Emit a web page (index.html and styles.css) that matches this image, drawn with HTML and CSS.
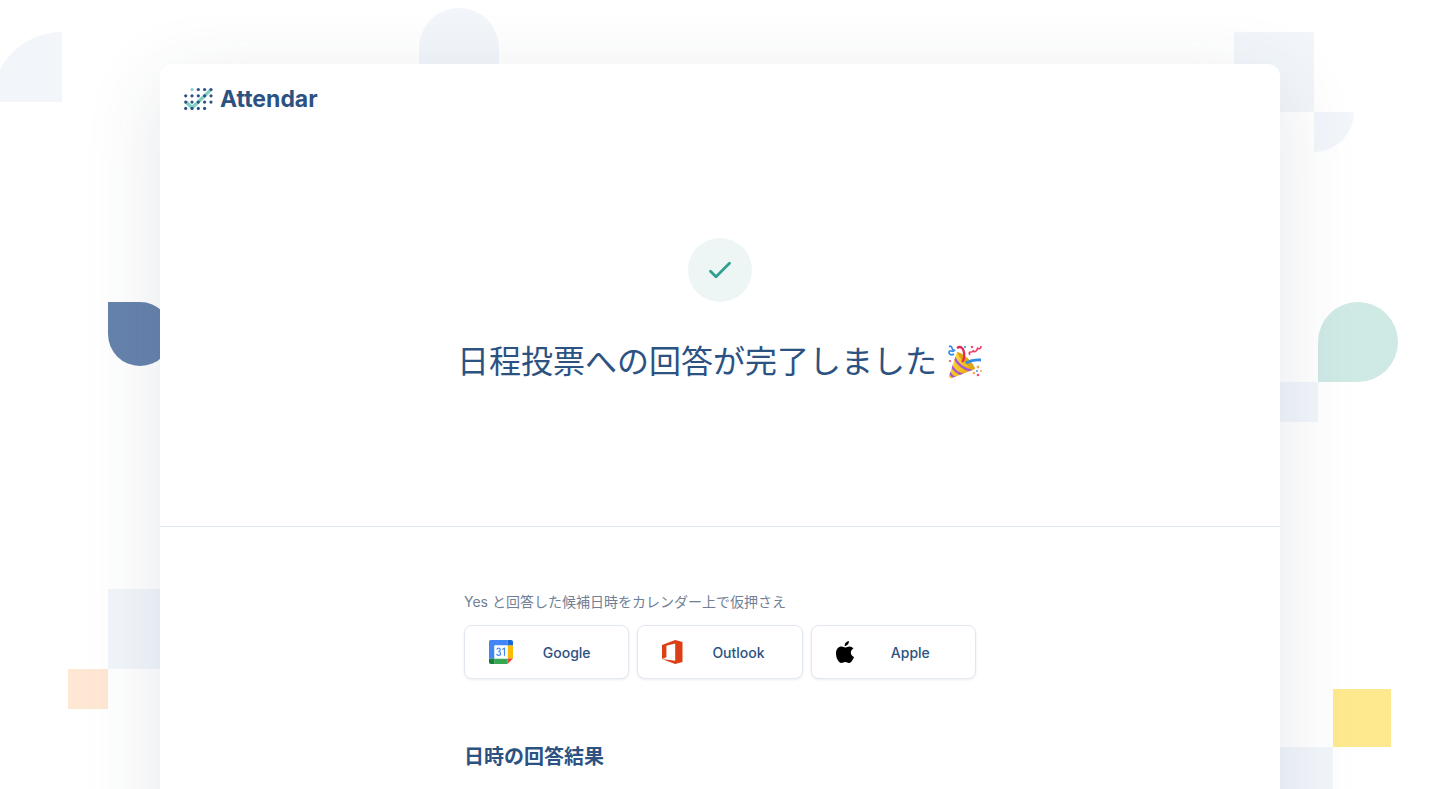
FILE: index.html
```html
<!DOCTYPE html>
<html lang="ja">
<head>
  <meta charset="UTF-8">
  <meta name="viewport" content="width=device-width, initial-scale=1">
  <title>Attendar</title>
  <link rel="stylesheet" href="styles.css">
</head>
<body>
  <div class="page">
    <div class="shapes" aria-hidden="true">
      <span class="shape quarter-left"></span>
      <span class="shape arch-top"></span>
      <span class="shape square-top"></span>
      <span class="shape quarter-right"></span>
      <span class="shape drop-navy"></span>
      <span class="shape drop-green"></span>
      <span class="shape square-mid"></span>
      <span class="shape square-left"></span>
      <span class="shape square-orange"></span>
      <span class="shape square-yellow"></span>
      <span class="shape square-bottom"></span>
    </div>

    <main class="card">
      <header class="card-header">
        <a class="logo" href="#">
          <svg width="30" height="24" viewBox="0 0 30 24" aria-hidden="true">
            <path d="M2 15L8.2 20.8L27 2.6" fill="none" stroke="#81cfc5" stroke-width="3.4"/>
            <circle cx="8" cy="2.5" r="1.6" fill="#81cfc5"/>
            <g fill="#2c5282">
              <circle cx="14.3" cy="2.5" r="1.6"/><circle cx="20.6" cy="2.5" r="1.6"/><circle cx="27" cy="2.5" r="1.6"/>
              <circle cx="1.7" cy="8.8" r="1.6"/><circle cx="8" cy="8.8" r="1.6"/><circle cx="14.3" cy="8.8" r="1.6"/><circle cx="20.6" cy="8.8" r="1.6"/><circle cx="27" cy="8.8" r="1.6"/>
              <circle cx="1.7" cy="15.1" r="1.6"/><circle cx="8" cy="15.1" r="1.6"/><circle cx="14.3" cy="15.1" r="1.6"/><circle cx="20.6" cy="15.1" r="1.6"/><circle cx="27" cy="15.1" r="1.6"/>
              <circle cx="1.7" cy="21.4" r="1.6"/><circle cx="8" cy="21.4" r="1.6"/><circle cx="14.3" cy="21.4" r="1.6"/><circle cx="20.6" cy="21.4" r="1.6"/>
            </g>
          </svg>
          <span>Attendar</span>
        </a>
      </header>

      <section class="hero">
        <div class="check">
          <svg width="24" height="24" viewBox="0 0 24 24" fill="none" stroke="#319f91" stroke-width="2.8" stroke-linecap="round" stroke-linejoin="round" aria-hidden="true">
            <path d="M2.5 13.2L8 18.8L21.5 5.2"/>
          </svg>
        </div>
        <h1>
          <span>日程投票への回答が完了しました</span>
          <svg class="party" width="36" height="36" viewBox="0 0 36 36" role="img" aria-label="party popper">
            <defs>
              <linearGradient id="cone" x1="0" y1="0" x2="1" y2="1">
                <stop offset="0" stop-color="#ffe15a"/>
                <stop offset=".55" stop-color="#f6c21c"/>
                <stop offset="1" stop-color="#c98700"/>
              </linearGradient>
              <clipPath id="coneClip"><path d="M10 8C16 9 26 18 28 25L5 34Q2 35 2 32Z"/></clipPath>
            </defs>
            <path d="M10 8C16 9 26 18 28 25L5 34Q2 35 2 32Z" fill="url(#cone)"/>
            <g clip-path="url(#coneClip)" fill="none" stroke="#a35ad0" stroke-width="2.4">
              <path d="M7 13Q12 24 25 27"/><path d="M4 21Q8 29 17 31"/><path d="M2 28Q4 32 9 34"/>
            </g>
            <path d="M10 8C16 9 26 18 28 25C20 22 12 15 10 8Z" fill="#dba514"/>
            <path d="M15 18C18 15 18 7 15 4Q13 2 10 4" fill="none" stroke="#e8274f" stroke-width="2.2"/>
            <path d="M19 19Q26 15 34 16" fill="none" stroke="#318ce8" stroke-width="2.8"/>
            <path d="M2 3Q4 1 5 4T8 6Q6 8 4 7T2 9Q4 12 7 10" fill="none" stroke="#318ce8" stroke-width="1.7"/>
            <path d="M23 11Q21 8 24 8T26 6Q27 9 29 7T30 4Q34 6 34 2" fill="none" stroke="#ec3b66" stroke-width="1.6"/>
            <g fill="#ee477b"><circle cx="25" cy="3" r="1.2"/><circle cx="3" cy="17" r="1.1"/><circle cx="31" cy="31" r="1.3"/></g>
            <g fill="#f6aa4b"><circle cx="31" cy="23" r="1.4"/><circle cx="27" cy="29" r="1.3"/><circle cx="34" cy="27" r="1"/></g>
            <g fill="#399bea"><circle cx="18" cy="3" r="1.1"/><circle cx="30" cy="27" r="1"/></g>
          </svg>
        </h1>
      </section>

      <section class="content">
        <p class="lead">Yes と回答した候補日時をカレンダー上で仮押さえ</p>
        <div class="calendars">
          <button type="button">
            <svg width="24" height="24" viewBox="0 0 24 24" aria-hidden="true">
              <path d="M1.8 0H18.5V5.5H5.5V18.5H0V1.8Q0 0 1.8 0Z" fill="#4285f4"/>
              <path d="M18.5 0H22.2Q24 0 24 1.8V5.5H18.5Z" fill="#1967d2"/>
              <path d="M18.5 5.5H24V18.5H18.5Z" fill="#fbbc04"/>
              <path d="M5.5 18.5H18.5V24H5.5Z" fill="#34a853"/>
              <path d="M0 18.5H5.5V24H1.8Q0 24 0 22.2Z" fill="#188038"/>
              <path d="M18.5 18.5H24L18.5 24Z" fill="#ea4335"/>
              <path d="M5.5 5.5H18.5V18.5H5.5Z" fill="#fff"/>
              <path d="M7.8 9.6Q8.2 8.2 9.6 8.2Q11.2 8.2 11.2 9.8Q11.2 11.5 9.3 11.5Q11.5 11.5 11.5 13.5Q11.5 15.4 9.6 15.4Q8 15.4 7.6 13.9M13.3 9.6L15.5 8.3V15.8" fill="none" stroke="#4285f4" stroke-width="1.2"/>
            </svg>
            <span>Google</span>
          </button>
          <button type="button">
            <svg width="21" height="24" viewBox="0 0 21 24" aria-hidden="true">
              <path d="M0 19V5L13.2 0L20.5 2.1V21.9L13.2 24L0 19L13.2 20.7V3.6L4.4 5.7V17.3Z" fill="#dc3e15"/>
            </svg>
            <span>Outlook</span>
          </button>
          <button type="button">
            <svg width="18" height="22" viewBox="0 0 18 22" aria-hidden="true">
              <path d="M12.9 0C13.1 2.7 11.1 5.1 8.7 5C8.5 2.5 10.6.2 12.9 0ZM17.4 7.5C13.6 9.8 14.3 14.4 18 15.9C16.8 19 15 22 12.8 22C11.4 22 10.9 21.1 9.2 21.1C7.5 21.1 6.9 22 5.5 22C2.4 22 0 16.5 0 12.5C0 8.1 2.6 5.6 5.4 5.6C7.1 5.6 8.3 6.6 9.3 6.6C10.3 6.6 11.7 5.5 13.6 5.5C15 5.5 16.5 6.2 17.4 7.5Z"/>
            </svg>
            <span>Apple</span>
          </button>
        </div>
        <h2>日時の回答結果</h2>
      </section>
    </main>
  </div>
</body>
</html>
```

FILE: styles.css
```css
* { box-sizing: border-box; }
body { margin: 0; background: #fff; color: #2c5282; font-family: Inter, "Noto Sans CJK JP", sans-serif; }
h1, h2, p { margin: 0; }

.page { position: relative; height: 100vh; overflow-x: hidden; overflow-y: auto; scrollbar-width: none; padding: 64px 0; }

/* background shapes */
.shape { position: absolute; width: 80px; height: 80px; background: #f2f6fb; }
.quarter-left { left: -8px; top: 32px; width: 70px; height: 70px; border-radius: 70px 0 0 0; }
.arch-top { left: calc(50% - 301px); top: 8px; border-radius: 40px 40px 0 0; }
.square-top { right: 126px; top: 32px; }
.quarter-right { right: 86px; top: 112px; width: 40px; height: 40px; border-radius: 0 0 40px 0; }
.drop-navy { left: 108px; top: 302px; width: 64px; height: 64px; border-radius: 0 32px 32px 32px; background: #6683ad; }
.drop-green { right: 42px; top: 302px; border-radius: 40px 40px 40px 0; background: #cfe9e5; }
.square-mid { right: 122px; top: 382px; width: 40px; height: 40px; }
.square-left { left: 108px; top: 589px; }
.square-orange { left: 68px; top: 669px; width: 40px; height: 40px; background: #ffe8d3; }
.square-yellow { right: 49px; top: 689px; width: 58px; height: 58px; background: #ffe98f; }
.square-bottom { right: 107px; top: 747px; }

.card { position: relative; max-width: 1120px; margin: 0 auto; padding-bottom: 96px; background: #fff;
        border-radius: 12px; box-shadow: 0 20px 80px rgba(45, 60, 85, 0.12); }
.card-header { padding: 20px 24px; }
.logo { display: inline-flex; align-items: center; gap: 6px; height: 30px; color: #2c5282; font-size: 23px;
        font-weight: 700; text-decoration: none; }

.hero { display: flex; flex-direction: column; align-items: center; padding: 103px 24px 140px; border-bottom: 1px solid #e2e8f0; }
.check { display: flex; align-items: center; justify-content: center; width: 64px; height: 64px; border-radius: 50%; background: #edf6f5; }
h1 { display: flex; align-items: center; justify-content: center; gap: 10px; margin-top: 36px; font-size: 32px;
     font-weight: 400; line-height: 48px; }
.party { flex: none; }

.content { max-width: 560px; margin: 0 auto; padding: 64px 24px 0; }
.lead { color: #718096; font-size: 14px; line-height: 22px; }
.calendars { display: grid; grid-template-columns: repeat(3, 1fr); gap: 8px; margin-top: 12px; }
.calendars button { display: flex; align-items: center; gap: 16px; height: 54px; padding: 0 24px; border: 1px solid #e2e8f0;
                    border-radius: 8px; background: #fff; box-shadow: 0 1px 3px rgba(0, 0, 0, 0.08); color: #2c5282;
                    font: inherit; font-size: 14px; font-weight: 500; cursor: pointer; }
.calendars button:hover { background: #f7fafc; }
.calendars svg { flex: none; }
.calendars span { flex: 1; text-align: center; }
h2 { margin-top: 63px; font-size: 20px; font-weight: 700; line-height: 30px; }
```
